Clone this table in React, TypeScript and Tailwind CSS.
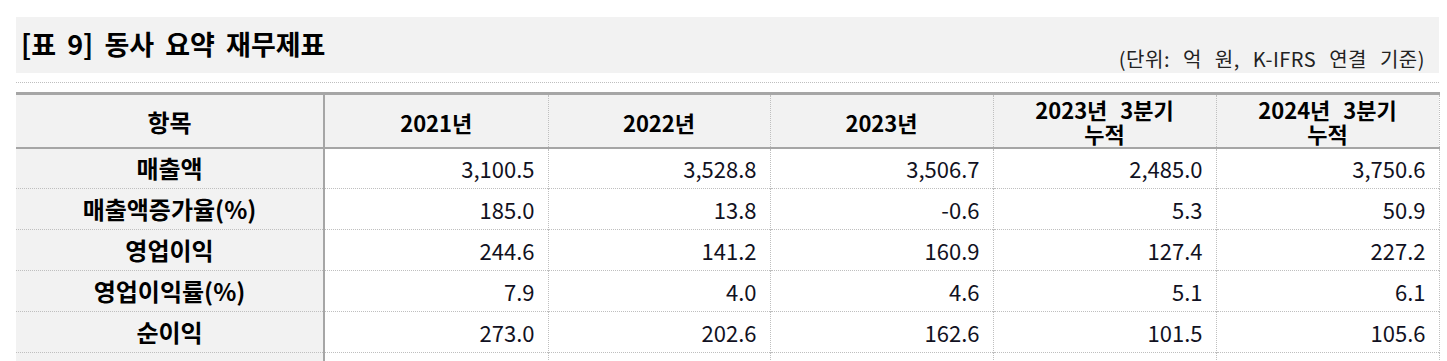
import React from "react";

const rows: [string, string[]][] = [
  ["매출액", ["3,100.5", "3,528.8", "3,506.7", "2,485.0", "3,750.6"]],
  ["매출액증가율(%)", ["185.0", "13.8", "-0.6", "5.3", "50.9"]],
  ["영업이익", ["244.6", "141.2", "160.9", "127.4", "227.2"]],
  ["영업이익률(%)", ["7.9", "4.0", "4.6", "5.1", "6.1"]],
  ["순이익", ["273.0", "202.6", "162.6", "101.5", "105.6"]],
  ["", ["", "", "", "", ""]],
];

export default function App() {
  return (
    <div
      className="bg-white w-[1447px] h-[361px] overflow-hidden pl-4 pr-2 pt-[17px]"
      style={{ fontFamily: '"Noto Sans CJK KR", "Noto Sans", sans-serif' }}
    >
      <div className="bg-[#f2f2f2] h-[56px] flex justify-between">
        <div className="pl-[5px] pt-[11px] text-[27px] leading-[32px] font-bold text-black [word-spacing:5px]">
          [표 9] 동사 요약 재무제표
        </div>
        <div className="self-end pr-[14px] pb-[1px] text-[20px] leading-[26px] text-[#222] tracking-[0.5px] [word-spacing:8px]">
          (단위: 억 원, K-IFRS 연결 기준)
        </div>
      </div>
      <div className="mt-[9px] border-t border-dotted border-[#bfbfbf]" />
      <table className="mt-[9px] w-[1423px] table-fixed border-collapse border-t-[3px] border-solid border-t-[#a6a6a6]">
        <colgroup>
          <col className="w-[308px]" />
          <col className="w-[224px]" />
          <col className="w-[222px]" />
          <col className="w-[223px]" />
          <col className="w-[223px]" />
          <col className="w-[223px]" />
        </colgroup>
        <thead>
          <tr className="h-[54px] bg-[#f2f2f2] border-b-2 border-solid border-b-[#a6a6a6] text-[22px] font-bold text-black">
            <th className="border-r-2 border-solid border-r-[#a6a6a6] pt-[3px] text-[24px]">항목</th>
            <th className="border-r border-dotted border-r-[#bfbfbf] pt-[3px]">2021년</th>
            <th className="border-r border-dotted border-r-[#bfbfbf] pt-[3px]">2022년</th>
            <th className="border-r border-dotted border-r-[#bfbfbf] pt-[3px]">2023년</th>
            <th className="border-r border-dotted border-r-[#bfbfbf] leading-[24px] [word-spacing:8px]">
              2023년 3분기
              <br />
              누적
            </th>
            <th className="border-r border-dotted border-r-[#bfbfbf] leading-[24px] [word-spacing:8px]">
              2024년 3분기
              <br />
              누적
            </th>
          </tr>
        </thead>
        <tbody>
          {rows.map(([label, vals], r) => (
            <tr key={r} className="h-[41px] border-b border-dotted border-b-[#bfbfbf]">
              <td className="bg-[#f2f2f2] border-r-2 border-solid border-r-[#a6a6a6] text-center text-[24px] leading-[30px] font-bold text-black">
                {label}
              </td>
              {vals.map((v, i) => (
                <td
                  key={i}
                  className="border-r border-dotted border-r-[#bfbfbf] text-right pr-[13px] text-[22px] leading-[30px] text-[#111122]"
                >
                  {v}
                </td>
              ))}
            </tr>
          ))}
        </tbody>
      </table>
    </div>
  );
}
